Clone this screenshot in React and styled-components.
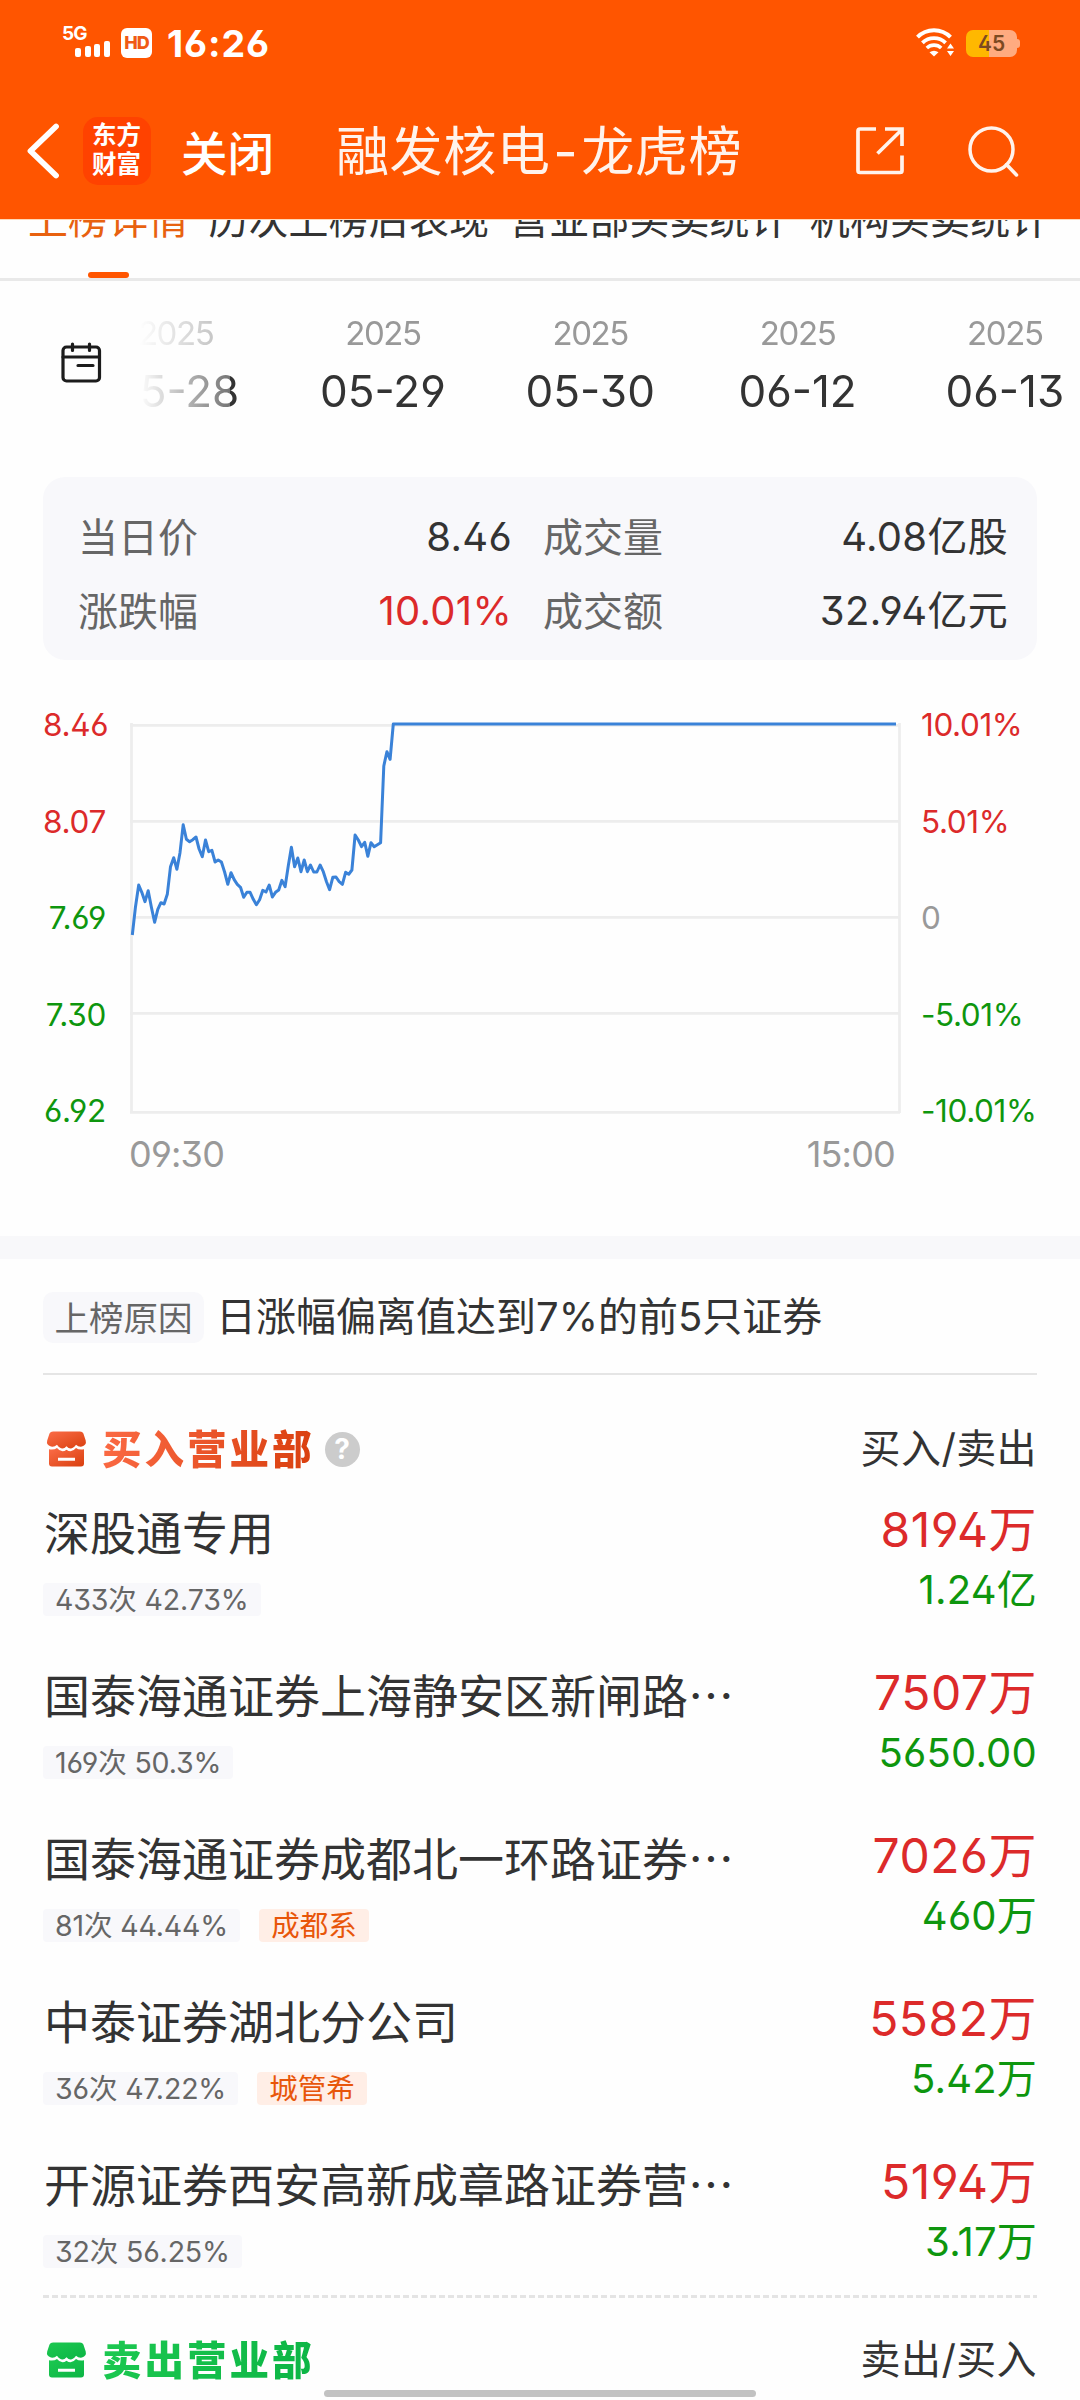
import React from "react";
import styled, { createGlobalStyle } from "styled-components";

const Global = createGlobalStyle`
  * { box-sizing: border-box; }
  body { margin: 0; background: #fff; }
`;

const latin = `Inter, "Noto Sans CJK SC", sans-serif`;
const cjk = `"Noto Sans CJK SC", sans-serif`;

const RED = "#dc2a2a";
const GREEN = "#0e960e";

const Screen = styled.div`
  position: relative;
  width: 1080px;
  height: 2400px;
  overflow: hidden;
  background: #fefefe;
  color: #333;
  font-family: ${latin};
  font-feature-settings: "cv03", "cv04", "ss01";
  font-size: 40px;
  line-height: 1;
  white-space: nowrap;
  display: flex;
  flex-direction: column;
`;

/* ---------- header ---------- */
const Header = styled.header`
  flex: none;
  height: 219px;
  background: #ff5500;
  color: #fff;
`;

const StatusBar = styled.div`
  height: 86px;
  display: flex;
  align-items: center;
  padding: 0 60px 0 62px;
`;

const Signal = styled.div`
  display: flex;
  flex-direction: column;
  width: 49px;
  margin-right: 10px;
  margin-top: -5px;
`;

const NetworkType = styled.span`
  font-size: 19px;
  font-weight: 700;
  line-height: 17px;
  height: 16px;
  letter-spacing: -0.8px;
`;

const Bars = styled.div`
  display: flex;
  align-items: flex-end;
  gap: 3.5px;
  padding-left: 13px;
  height: 16px;
`;

const Bar = styled.i`
  width: 6px;
  height: ${(p) => p.$h}px;
  border-radius: 2px;
  background: #fff;
`;

const HdBadge = styled.span`
  width: 31px;
  height: 30px;
  border-radius: 6px;
  background: #fff;
  color: #f05a14;
  font-size: 18px;
  font-weight: 800;
  line-height: 30px;
  letter-spacing: -1px;
  text-align: center;
`;

const Clock = styled.span`
  margin-left: 15px;
  margin-top: 2px;
  flex: 1;
  font-size: 37.5px;
  font-weight: 700;
  letter-spacing: 0.9px;
`;

const Battery = styled.div`
  display: flex;
  align-items: center;
  margin-left: 12px;
`;

const BatteryBody = styled.span`
  width: 51px;
  height: 27px;
  border-radius: 7px;
  background: linear-gradient(90deg, #ffb800 23px, #ffab80 23px);
  color: #7c4a22;
  font-size: 21px;
  font-weight: 600;
  line-height: 28px;
  text-align: center;
`;

const BatteryNub = styled.span`
  width: 3px;
  height: 9px;
  border-radius: 0 3px 3px 0;
  background: #ffab80;
`;

const NavBar = styled.nav`
  height: 130px;
  display: flex;
  align-items: center;
  padding: 0 61px 0 26px;
`;

const AppBadge = styled.div`
  width: 68px;
  height: 68px;
  margin-left: 23px;
  padding: 2px 1px 0 0;
  border-radius: 15px;
  background: #ff4200;
  color: #fff;
  font: 700 24.5px/29px ${cjk};
  text-align: center;
  white-space: normal;
`;

const CloseLabel = styled.span`
  margin-left: 30px;
  font: 500 46.5px/60px ${cjk};
  margin-top: 0;
`;

const Title = styled.h1`
  margin: 1px 0 0 62px;
  flex: 1;
  font: 400 53.2px/60px ${latin};
  letter-spacing: 0.4px;
  color: #fff3ec;
`;

const Hyphen = styled.span`
  margin: 0 3px 0 3px;
`;

const SearchSlot = styled.div`
  margin-left: 64px;
  display: flex;
`;

/* ---------- tabs ---------- */
const Tabs = styled.div`
  flex: none;
  height: 62px;
  border-top: 1px solid #ffd9b8;
  border-bottom: 3px solid #e9e9e9;
  overflow: hidden;
  display: flex;
  gap: 20px;
  padding-left: 28px;
`;

const Tab = styled.div`
  flex: none;
  display: flex;
  flex-direction: column;
  align-items: center;
  justify-content: space-between;
  font: 400 40px/40px ${cjk};
  letter-spacing: 0.1px;
  color: ${(p) => (p.$active ? "#e8610f" : "#333")};
  span { margin-top: -23px; }
`;

const TabMark = styled.i`
  width: 41px;
  height: 6px;
  border-radius: 3px;
  background: #ff5500;
`;

/* ---------- dates ---------- */
const DateBar = styled.div`
  flex: none;
  height: 196px;
  display: flex;
`;

const CalendarSlot = styled.div`
  flex: none;
  width: 140px;
  padding: 60px 0 0 60px;
`;

const DateViewport = styled.div`
  flex: 1;
  overflow: hidden;
  mask-image: linear-gradient(90deg, transparent 0, rgba(0, 0, 0, 0.68) 90px, #000 90px);
`;

const DateTrack = styled.div`
  display: flex;
  margin-left: -68px;
`;

const DateItem = styled.div`
  flex: none;
  width: 207.3px;
  padding-top: 32px;
  text-align: center;
`;

const Year = styled.div`
  font-size: 33px;
  line-height: 40px;
  letter-spacing: -1.4px;
  color: #999;
`;

const Day = styled.div`
  margin-top: 13px;
  font-size: 44px;
  line-height: 50px;
  letter-spacing: 0;
`;

/* ---------- summary card ---------- */
const Summary = styled.div`
  flex: none;
  height: 183px;
  margin: 0 43px;
  padding: 23px 29px 0 35px;
  border-radius: 22px;
  background: #f8f8fb;
  display: grid;
  grid-template-columns: 150px 284px 31px 1fr auto;
  grid-auto-rows: 74px;
  align-items: center;
`;

const Label = styled.span`
  font-family: ${cjk};
  padding-bottom: 5px;
  color: #666;
  ${(p) => p.$second && "grid-column: 4;"}
`;

const Value = styled.span`
  text-align: right;
  letter-spacing: 0.3px;
  color: ${(p) => p.$color || "#333"};
`;

/* ---------- chart ---------- */
const ChartArea = styled.section`
  flex: none;
  height: 576px;
  padding: 16px 43px 0;
`;

const ChartRow = styled.div`
  display: flex;
`;

const Scale = styled.div`
  flex: none;
  width: ${(p) => p.$w}px;
  text-align: ${(p) => p.$align};
  font-size: 31.5px;
  letter-spacing: ${(p) => p.$gap}px;
  padding-top: 1px;
`;

const Tick = styled.div`
  height: 96.5px;
  line-height: 96.5px;
  color: ${(p) => p.$color};
`;

const Plot = styled.svg`
  flex: none;
  display: block;
  margin: 44px 20px 0 24px;
`;

const TimeAxis = styled.div`
  display: flex;
  justify-content: space-between;
  margin: -26px 142px 0 86px;
  font-size: 36px;
  line-height: 40px;
  letter-spacing: -0.8px;
  color: #999;
`;

const Band = styled.div`
  flex: none;
  height: 23px;
  background: #f8f8fa;
`;

/* ---------- reason ---------- */
const Reason = styled.div`
  flex: none;
  height: 116px;
  margin: 0 43px;
  padding-top: 3px;
  border-bottom: 2px solid #e5e5e5;
  display: flex;
  align-items: center;
`;

const ReasonTag = styled.span`
  width: 161px;
  height: 51px;
  margin-right: 12px;
  border-radius: 10px;
  background: #f8f8fb;
  color: #666;
  font: 400 34.5px/48px ${cjk};
  text-align: center;
`;

const ReasonText = styled.span`
  margin-top: -2px;
`;

/* ---------- departments ---------- */
const GroupHead = styled.div`
  flex: none;
  display: flex;
  align-items: center;
  height: ${(p) => p.$h}px;
  padding-top: ${(p) => p.$pad || 0}px;
  margin: 0 43px;
  padding-left: 3px;
`;

const GroupTitle = styled.h2`
  margin: -5px 0 0 15px;
  font: 900 39.5px/50px ${cjk};
  letter-spacing: 3px;
  color: transparent;
  background: linear-gradient(100deg, ${(p) => p.$from}, ${(p) => p.$to});
  background-clip: text;
`;

const HelpDot = styled.span`
  width: 35px;
  height: 35px;
  margin-left: 10px;
  border-radius: 50%;
  background: #ccc;
  color: #fff;
  font-size: 28px;
  font-weight: 700;
  line-height: 35px;
  text-align: center;
`;

const ColumnName = styled.span`
  margin-left: auto;
  letter-spacing: 0.4px;
`;

const List = styled.div`
  flex: none;
  height: 799px;
  display: flex;
  flex-direction: column;
  margin: 0 43px;
`;

const Item = styled.div`
  flex: none;
  height: 163px;
  display: flex;
  justify-content: space-between;
  &:last-child { height: 147px; }
`;

const ItemName = styled.div`
  padding-left: 1px;
  font: 400 46px/60px ${cjk};
  margin-top: 4px;
`;

const TagRow = styled.div`
  display: flex;
  gap: 19px;
  margin-top: 23px;
`;

const Tag = styled.span`
  height: 33px;
  padding: 0 12px;
  border-radius: 4px;
  background: ${(p) => (p.$hot ? "#ffeee6" : "#f8f8fb")};
  color: ${(p) => (p.$hot ? "#e8560a" : "#666")};
  font-size: 28.5px;
  line-height: 33px;
  letter-spacing: ${(p) => (p.$hot ? "0" : "-0.15px")};
`;

const Amounts = styled.div`
  text-align: right;
`;

const Amount = styled.div`
  font-size: ${(p) => (p.$big ? 48 : 40)}px;
  line-height: 60px;
  letter-spacing: ${(p) => (p.$big ? 0.5 : 0.2)}px;
  margin-top: ${(p) => (p.$big ? 4 : 0)}px;
  color: ${(p) => (p.$big ? RED : GREEN)};
`;

const Dashes = styled.div`
  flex: none;
  height: 3px;
  margin: 0 43px;
  background: repeating-linear-gradient(90deg, #e4e4e4 0 6px, transparent 6px 9px);
`;

const HomeIndicator = styled.div`
  position: absolute;
  left: 324px;
  bottom: 3px;
  width: 432px;
  height: 7px;
  border-radius: 4px;
  background: #c2c2c2;
`;

/* ---------- icons ---------- */
const WifiIcon = () => (
  <svg width="38" height="30" viewBox="0 0 38 30" fill="none" stroke="#fff">
    <path d="M1.5 9.2A23 23 0 0 1 34.5 9.2" strokeWidth="4" />
    <path d="M6.4 14.8A16.5 16.5 0 0 1 29.6 14.8" strokeWidth="3.8" />
    <path d="M10.8 20A10.5 10.5 0 0 1 25.2 20" strokeWidth="3.6" />
    <path d="M18 28.5L13.5 24.3Q18 21 22.5 24.3Z" fill="#fff" stroke="none" />
    <path d="M31 20.5L34.5 15.5L38 20.5ZM31 23L34.5 28L38 23Z" fill="#fff" stroke="none" />
  </svg>
);

const BackIcon = () => (
  <svg width="34" height="56" viewBox="0 0 34 56" fill="none" stroke="#fff" strokeWidth="5.8" strokeLinecap="round" strokeLinejoin="round">
    <path d="M30 3.5L4.5 28L30 52.5" />
  </svg>
);

const ShareIcon = () => (
  <svg width="48" height="48" viewBox="0 0 48 48" fill="none" stroke="#fff3ec" strokeWidth="3.7">
    <path d="M20 2H4Q2 2 2 4V43.5Q2 45.5 4 45.5H44Q46 45.5 46 43.5V28.5" />
    <path d="M29 2H46V19M45 3.5L21.5 26.5" />
  </svg>
);

const SearchIcon = () => (
  <svg width="51" height="51" viewBox="0 0 51 51" fill="none" stroke="#fff3ec" strokeWidth="3.5" strokeLinecap="round">
    <circle cx="23.5" cy="23.5" r="21.5" />
    <path d="M38.5 38.5L48.5 49" />
  </svg>
);

const CalendarIcon = () => (
  <svg width="42" height="42" viewBox="0 0 42 42" fill="none" stroke="#1c1c1c" strokeWidth="3.2" strokeLinecap="round">
    <rect x="3" y="6" width="36.5" height="34" rx="3.5" />
    <path d="M3 16H39.5M12.5 3V9.5M29.5 3V9.5M18 24.5H33" />
  </svg>
);

const ShopIcon = ({ id, from, to }) => (
  <svg width="41" height="36" viewBox="0 0 41 36">
    <defs>
      <linearGradient id={id} x1="0" y1="0" x2="1" y2="1">
        <stop offset="0" stopColor={from} />
        <stop offset="1" stopColor={to} />
      </linearGradient>
    </defs>
    <path
      fill={`url(#${id})`}
      d="M7 0.5H34Q36.500 0.500 37.400 2.600L39.700 9.500Q40.800 14 36 15.600Q32.500 16.200 30 13.800Q25 20.500 20.500 15.200Q16 20.500 11 13.800Q8.500 16.200 5 15.600Q0 14 1.200 9.500L3.500 2.600Q4.500 0.500 7 0.500Z"
    />
    <path
      fill={`url(#${id})`}
      fillRule="evenodd"
      d="M3 18.300Q8 19.200 11 17Q15.500 22.500 20.500 18.700Q25.500 22.500 30 17Q33 19.200 38 18.300V32.500Q38 35.500 35 35.500H6Q3 35.500 3 32.500ZM12 26.800V29.800H29V26.800Z"
    />
  </svg>
);

/* ---------- data ---------- */
const tabs = ["上榜详情", "历次上榜后表现", "营业部买卖统计", "机构买卖统计"];
const dates = ["05-28", "05-29", "05-30", "06-12", "06-13"];
const prices = [["8.46", RED], ["8.07", RED], ["7.69", GREEN], ["7.30", GREEN], ["6.92", GREEN]];
const percents = [["10.01%", RED], ["5.01%", RED], ["0", "#999"], ["-5.01%", GREEN], ["-10.01%", GREEN]];

const minutes = [
  705, 620, 555, 577, 605, 572, 622, 667, 628, 608, 612, 583, 500, 473, 508, 458, 374, 418, 425, 419, 411,
  447, 470, 420, 455, 451, 486, 480, 486, 516, 553, 518, 539, 553, 562, 592, 577, 577, 598, 614, 599, 571,
  576, 555, 591, 577, 570, 541, 560, 497, 442, 500, 474, 515, 480, 515, 495, 516, 516, 495, 515, 545, 569,
  532, 531, 545, 553, 517, 523, 510, 405, 420, 440, 427, 469, 428, 440, 434, 428, 198, 155, 178, 72,
];
const curve =
  minutes.map((v, i) => `${(2.3 + i * 3.183).toFixed(1)},${(v / 3 - 20).toFixed(1)}`).join(" ") + " 766,4";

const buyers = [
  { name: "深股通专用", stat: "433次 42.73%", buy: "8194万", sell: "1.24亿" },
  { name: "国泰海通证券上海静安区新闸路…", stat: "169次 50.3%", buy: "7507万", sell: "5650.00" },
  { name: "国泰海通证券成都北一环路证券…", stat: "81次 44.44%", hot: "成都系", buy: "7026万", sell: "460万" },
  { name: "中泰证券湖北分公司", stat: "36次 47.22%", hot: "城管希", buy: "5582万", sell: "5.42万" },
  { name: "开源证券西安高新成章路证券营…", stat: "32次 56.25%", buy: "5194万", sell: "3.17万" },
];

export default function App() {
  return (
    <Screen>
      <Global />
      <Header>
        <StatusBar>
          <Signal>
            <NetworkType>5G</NetworkType>
            <Bars>
              {[9, 10.5, 13, 16].map((h) => (
                <Bar key={h} $h={h} />
              ))}
            </Bars>
          </Signal>
          <HdBadge>HD</HdBadge>
          <Clock>16:26</Clock>
          <WifiIcon />
          <Battery>
            <BatteryBody>45</BatteryBody>
            <BatteryNub />
          </Battery>
        </StatusBar>
        <NavBar>
          <BackIcon />
          <AppBadge>
            东方
            <br />
            财富
          </AppBadge>
          <CloseLabel>关闭</CloseLabel>
          <Title>
            融发核电<Hyphen>-</Hyphen>龙虎榜
          </Title>
          <ShareIcon />
          <SearchSlot>
            <SearchIcon />
          </SearchSlot>
        </NavBar>
      </Header>

      <Tabs>
        {tabs.map((t, i) => (
          <Tab key={t} $active={i === 0}>
            <span>{t}</span>
            {i === 0 && <TabMark />}
          </Tab>
        ))}
      </Tabs>

      <DateBar>
        <CalendarSlot>
          <CalendarIcon />
        </CalendarSlot>
        <DateViewport>
          <DateTrack>
            {dates.map((d) => (
              <DateItem key={d}>
                <Year>2025</Year>
                <Day>{d}</Day>
              </DateItem>
            ))}
          </DateTrack>
        </DateViewport>
      </DateBar>

      <Summary>
        <Label>当日价</Label>
        <Value>8.46</Value>
        <Label $second>成交量</Label>
        <Value>4.08亿股</Value>
        <Label>涨跌幅</Label>
        <Value $color={RED}>10.01%</Value>
        <Label $second>成交额</Label>
        <Value>32.94亿元</Value>
      </Summary>

      <ChartArea>
        <ChartRow>
          <Scale $w={63} $align="right" $gap={-0.3}>
            {prices.map(([t, c]) => (
              <Tick key={t} $color={c}>{t}</Tick>
            ))}
          </Scale>
          <Plot width="771" height="396" viewBox="0 0 771 396" fill="none">
            <path
              d="M0 5.3H770M0 101.3H770M0 197.3H770M0 293.3H770M0 392.3H770M1.5 3V393M769.5 3V393"
              stroke="#ededed"
              strokeWidth="2.7"
            />
            <polyline points={curve} stroke="#3a82d8" strokeWidth="3" strokeLinejoin="round" />
          </Plot>
          <Scale $w={116} $align="left" $gap={-0.4}>
            {percents.map(([t, c]) => (
              <Tick key={t} $color={c}>{t}</Tick>
            ))}
          </Scale>
        </ChartRow>
        <TimeAxis>
          <span>09:30</span>
          <span>15:00</span>
        </TimeAxis>
      </ChartArea>

      <Band />

      <Reason>
        <ReasonTag>上榜原因</ReasonTag>
        <ReasonText>日涨幅偏离值达到7%的前5只证券</ReasonText>
      </Reason>

      <GroupHead $h={121} $pad={27}>
        <ShopIcon id="buyShop" from="#fb6d48" to="#d93f0e" />
        <GroupTitle $from="#fb6a44" $to="#d93f0e">买入营业部</GroupTitle>
        <HelpDot>?</HelpDot>
        <ColumnName>买入/卖出</ColumnName>
      </GroupHead>

      <List>
        {buyers.map((b) => (
          <Item key={b.name}>
            <div>
              <ItemName>{b.name}</ItemName>
              <TagRow>
                <Tag>{b.stat}</Tag>
                {b.hot && <Tag $hot>{b.hot}</Tag>}
              </TagRow>
            </div>
            <Amounts>
              <Amount $big>{b.buy}</Amount>
              <Amount>{b.sell}</Amount>
            </Amounts>
          </Item>
        ))}
      </List>

      <Dashes />

      <GroupHead $h={124}>
        <ShopIcon id="sellShop" from="#1cc850" to="#0cb545" />
        <GroupTitle $from="#1cc850" $to="#0cb545">卖出营业部</GroupTitle>
        <ColumnName>卖出/买入</ColumnName>
      </GroupHead>
      <HomeIndicator />
    </Screen>
  );
}
